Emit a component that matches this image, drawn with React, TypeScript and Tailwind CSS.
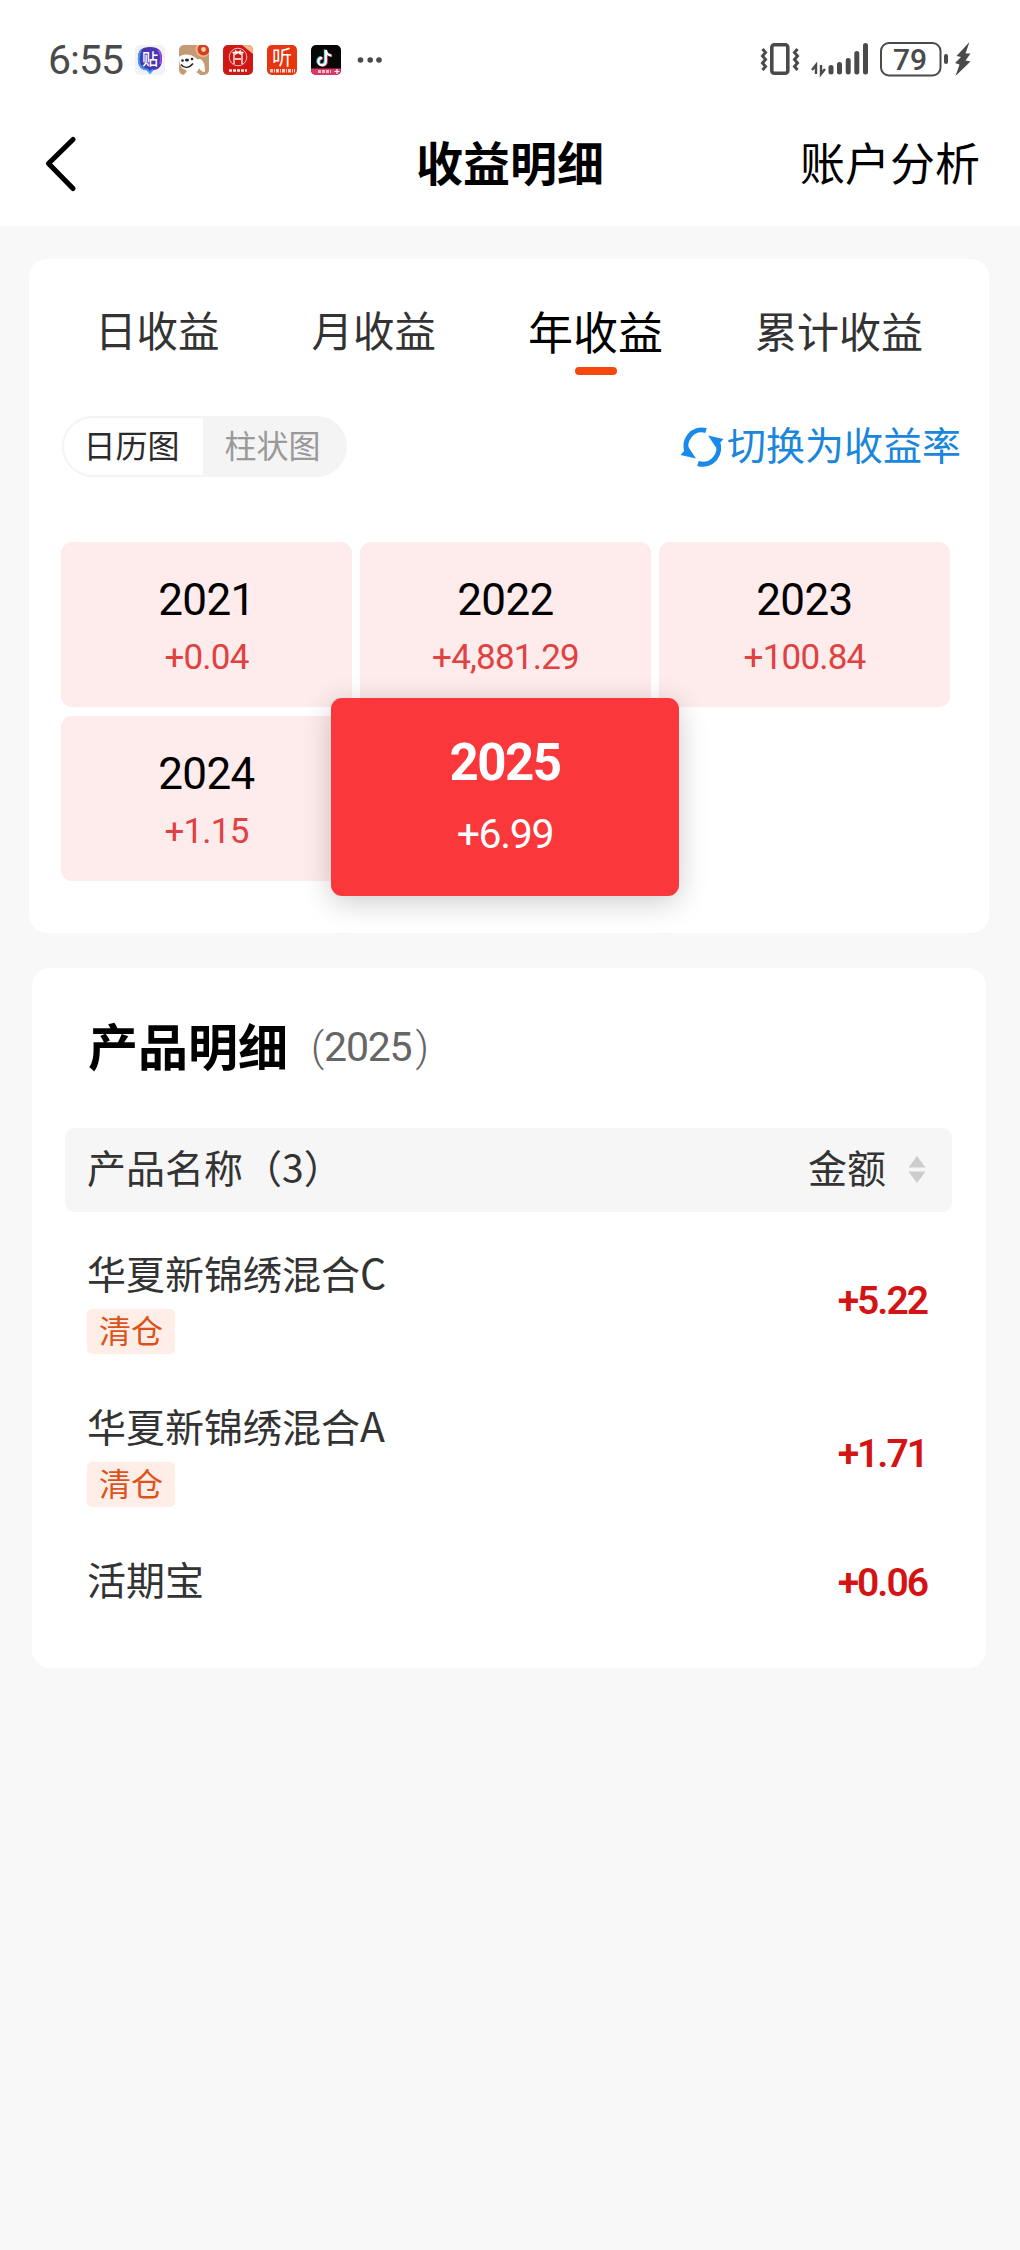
import React from "react";

const CJK = "font-['Noto_Sans_CJK_SC',sans-serif]";
const NUM = "font-['Roboto','Noto_Sans_CJK_SC',sans-serif]";

function StatusIcons() {
  return (
    <svg width="252" height="40" viewBox="130 40 252 40" className="ml-[7px]">
      <rect x="135" y="45" width="30" height="30" rx="5" fill="#f1f1f6" />
      <path d="M150 47c9 0 12 4 12 11.500s-3 11.500-9 11.500l-3 3.500-3-3.500c-6 0-9-4-9-11.500s3-11.500 12-11.500z" fill="#4a35b0" />
      <path d="M141 50c-3 5-3 13 0 17 2 2 4 2.500 6 2.500l3 3 3-3" fill="none" stroke="#3a9cf5" strokeWidth="2" />
      <path d="M158 50c3 3 3.500 9 2 14" fill="none" stroke="#9a4be0" strokeWidth="2" />
      <text x="150" y="65" fontSize="16" fontWeight="500" fill="#fff" textAnchor="middle" fontFamily="Noto Sans CJK SC">贴</text>

      <clipPath id="dog"><rect x="179" y="45" width="30" height="30" rx="5" /></clipPath>
      <g clipPath="url(#dog)">
        <rect x="179" y="45" width="30" height="30" fill="#c49b74" />
        <circle cx="203" cy="49.500" r="7.500" fill="#efb98a" />
        <circle cx="203.500" cy="49.500" r="6" fill="#d23e26" />
        <circle cx="203.500" cy="49.500" r="2.400" fill="#f5d09a" />
        <path d="M179 57c3-3 11-4 17 1 1 1 2 2 3 1 4 0 6 5 6 13-3 0-5-2-6-4-1 4-5 6-9 7-4-1-3-4-4-5-4-1-7-4-7-13z" fill="#fff" />
        <path d="M184 75c1-4 8-5 14-2l2 2z" fill="#fff" />
        <circle cx="182.500" cy="60.500" r="1.300" fill="#222" />
        <circle cx="192" cy="59" r="1.300" fill="#222" />
        <ellipse cx="187" cy="60" rx="2" ry="1.500" fill="#222" />
        <path d="M181 64.500c3 4 8 4 12-1" fill="none" stroke="#222" strokeWidth="1.400" />
      </g>

      <rect x="223" y="45" width="30" height="30" rx="5" fill="#cf1713" />
      <path d="M242 45h6a5 5 0 0 1 5 5v4z" fill="#f0b98a" />
      <circle cx="238" cy="57" r="8.800" fill="none" stroke="#fff" strokeWidth="0.900" opacity=".8" />
      <path d="M232.500 52.500h11M234 52.500v11.500M242 52.500v11.500M235 59h6M235 50.500l6 4M241 50.500l-6 4" fill="none" stroke="#fff" strokeWidth="1.300" />
      <path d="M229 70.500h18" stroke="#fff" strokeWidth="2.500" strokeDasharray="3 1" opacity=".9" />

      <rect x="267" y="45" width="30" height="30" rx="5" fill="#e8340f" />
      <text x="282" y="65" fontSize="20" fill="#fff" textAnchor="middle" fontFamily="Noto Sans CJK SC">听</text>
      <path d="M270 70.800h25" stroke="#fff" strokeWidth="3.600" strokeDasharray="3 1 1 1" opacity=".8" />

      <clipPath id="note"><rect x="311" y="45" width="30" height="30" rx="5" /></clipPath>
      <g clipPath="url(#note)">
        <rect x="311" y="45" width="30" height="30" fill="#060606" />
        <path d="M325 49.500v11.500a3.700 3.700 0 1 1-3.700-3.700M325 49.500c0 3 2 5 5.500 5.500" fill="none" stroke="#25e0dc" strokeWidth="2.400" />
        <path d="M326.600 50.500v11.500a3.700 3.700 0 1 1-3.700-3.700M326.600 50.500c0 3 2 5 5.500 5.500" fill="none" stroke="#f0406a" strokeWidth="2.400" />
        <path d="M325.800 50v11.500a3.700 3.700 0 1 1-3.700-3.700M325.800 50c0 3 2 5 5.500 5.500" fill="none" stroke="#fff" strokeWidth="2.200" />
        <path d="M311 68.500h30v6.500h-30z" fill="#d93a68" />
        <path d="M318 71.500h13" stroke="#fff" strokeWidth="3" strokeDasharray="3 1" opacity=".65" />
        <path d="M337 69v5M334.500 71.500h5" stroke="#fff" strokeWidth="1.200" />
      </g>
      <g fill="#4a4a4a"><circle cx="360.500" cy="60" r="2.800" /><circle cx="370.200" cy="60" r="2.800" /><circle cx="379" cy="60" r="2.800" /></g>
    </svg>
  );
}

function SystemIcons() {
  return (
    <svg width="216" height="40" viewBox="758 40 216 40" className="mr-[46px] ml-auto">
      <g fill="none" stroke="#4a4a4a">
        <rect x="771.800" y="44.800" width="16" height="28.500" rx="2.500" strokeWidth="3.600" />
        <path d="M762.500 49l3 3.500-3 3.500 3 3.500-3 3.500 3 3.500-3 3.500M797.500 49l-3 3.500 3 3.500-3 3.500 3 3.500-3 3.500 3 3.500" strokeWidth="3" />
        <path d="M831 67.500v4.500M839.500 64.500v7.500M848.200 60.500v11.500M856.800 53.500v18.500M865.500 45.500v26.500" strokeWidth="5" strokeLinecap="round" />
        <path d="M816 74v-9l-4 5M821 65v9l4-5" strokeWidth="2.400" />
        <rect x="881" y="43" width="59.500" height="32.500" rx="8" strokeWidth="2" />
        <path d="M946 56v6" strokeWidth="4" strokeLinecap="round" />
      </g>
      <path d="M969.500 42L956.500 56l4.500 1-6 6 4.500 1.500-4 11.500 15-14.500-5-1 5-7h-5z" fill="#4a4a4a" />
      <text x="910" y="70" fontSize="30" fontWeight="500" fill="#4a4a4a" textAnchor="middle" fontFamily="Roboto">79</text>
    </svg>
  );
}

const tabs = [
  { label: "日收益", cls: "ml-[66px] text-[41.500px] text-[#333]" },
  { label: "月收益", cls: "ml-[92px] text-[41.500px] text-[#333]" },
  { label: "年收益", cls: "ml-[92px] text-[45px] text-black", active: true },
  { label: "累计收益", cls: "ml-[92px] text-[42px] text-[#333]" },
];

const years = [
  ["2021", "+0.04"],
  ["2022", "+4,881.29"],
  ["2023", "+100.84"],
  ["2024", "+1.15"],
];

const products = [
  { name: "华夏新锦绣混合", share: "C", tag: "清仓", amount: "+5.22" },
  { name: "华夏新锦绣混合", share: "A", tag: "清仓", amount: "+1.71" },
  { name: "活期宝", share: "", amount: "+0.06" },
];

export default function App() {
  return (
    <div className={`min-h-[2250px] w-[1020px] bg-[#f8f8f8] ${CJK}`}>
      <header className="h-[226px] bg-white">
        <div className="flex h-[120px] items-center pl-[48px]">
          <span className={`w-[75px] text-[41px] leading-none tracking-[-1px] whitespace-nowrap text-[#4a4a4a] ${NUM}`}>6:55</span>
          <StatusIcons />
          <SystemIcons />
        </div>
        <div className="grid h-[88px] grid-cols-3 items-center">
          <svg width="34" height="60" viewBox="0 0 34 60" className="ml-[43px]">
            <path d="M30 5.500L5.500 29.500l24.500 25" fill="none" stroke="#000" strokeWidth="5.200" strokeLinecap="round" strokeLinejoin="round" />
          </svg>
          <h1 className="pb-[8px] text-center text-[47px] leading-none font-bold text-black">收益明细</h1>
          <span className="mr-[40px] pb-[6px] text-right text-[45px] leading-none text-black">账户分析</span>
        </div>
      </header>

      <section className="mt-[33px] ml-[29px] h-[674px] w-[960px] rounded-[18px] bg-white">
        <nav className="flex h-[146px] items-center pb-[4px]">
          {tabs.map((t) => (
            <div key={t.label} className={`relative leading-none whitespace-nowrap ${t.cls}`}>
              {t.label}
              {t.active && <span className="absolute top-[59px] left-1/2 h-[8px] w-[42px] -translate-x-1/2 rounded-full bg-[#f5490f]" />}
            </div>
          ))}
        </nav>
        <div className="mt-[11px] mr-[28px] ml-[33px] flex h-[61px] items-center justify-between">
          <div className="flex h-[61px] w-[285px] overflow-hidden rounded-full border-2 border-[#f4f4f4] bg-[#f4f4f4] text-[32px] leading-none">
            <div className="flex w-[139px] items-center justify-center bg-white pr-[4px] pb-[6px] text-[#2b2b2b]">日历图</div>
            <div className="flex flex-1 items-center justify-center pr-[3px] pb-[6px] text-[#999]">柱状图</div>
          </div>
          <div className="flex items-center text-[39px] leading-none text-[#1a86dc]">
            <svg width="44" height="44" viewBox="0 0 44 44" className="mr-[3px]">
              <g fill="none" stroke="#1a8aea" strokeWidth="5">
                <path d="M7.500 28A16 16 0 0 1 26 5.500" />
                <path d="M37 16A16 16 0 0 1 18 38.500" />
              </g>
              <path d="M28 10.500l15.500 3.500-7.500 8.500zM16 33.500L.5 30 8 21.500z" fill="#1a8aea" />
            </svg>
            <span className="pb-[7px]">切换为收益率</span>
          </div>
        </div>

        <div className="mt-[65px] ml-[32px] grid w-[889px] grid-cols-3 gap-x-[8px] gap-y-[9px]">
          {years.map(([y, v]) => (
            <div key={y} className={`flex h-[165px] flex-col items-center rounded-[11px] bg-[#feebeb] ${NUM}`}>
              <span className="mt-[36px] text-[44px] leading-[44px] tracking-[-0.600px] text-black">{y}</span>
              <span className="mt-[18px] text-[35px] leading-[35px] tracking-[-0.800px] text-[#e04141]">{v}</span>
            </div>
          ))}
          <div className={`relative -top-[18px] -left-[29px] z-10 flex h-[198px] w-[348px] flex-col items-center rounded-[11px] bg-[#fa373a] text-white shadow-[0_6px_30px_rgba(0,0,0,0.200)] ${NUM}`}>
            <span className="mt-[39px] text-[51px] leading-[51px] font-bold tracking-[-1.500px]">2025</span>
            <span className="mt-[26px] text-[41px] leading-[41px] tracking-[-1.300px]">+6.99</span>
          </div>
        </div>
      </section>

      <section className="mt-[35px] ml-[32px] h-[700px] w-[954px] rounded-[18px] bg-white px-[33px] pt-[48px]">
        <div className="ml-[23px] flex h-[64px] items-center leading-none">
          <h2 className="pb-[9px] text-[50px] font-bold text-black">产品明细</h2>
          <span className={`ml-[23px] pb-[2px] text-[41px] text-[#666] ${NUM}`}>
            <span className="font-light">(</span>
            <span className="mr-[4px] tracking-[-1.200px]">2025</span>
            <span className="font-light">)</span>
          </span>
        </div>
        <div className="mt-[48px] flex h-[84px] w-[887px] items-center rounded-[9px] bg-[#f6f6f6] px-[22px] text-[39px] leading-none text-[#333]">
          <span className="pb-[7px]">产品名称（3）</span>
          <span className="ml-auto pb-[7px]">金额</span>
          <svg width="18" height="27" viewBox="0 0 18 27" className="mr-[4px] mb-[1px] ml-[22px]">
            <path d="M9 0l8.500 11.500H.5zM9 27l8.500-11.500H.5z" fill="#ccc" />
          </svg>
        </div>
        <div className="pt-[37px]">
          {products.map((p) => (
            <div key={p.name + p.share} className={p.tag ? "ml-[22px] flex h-[153px] w-[840px] justify-between" : "ml-[22px] flex h-[60px] w-[840px] justify-between"}>
              <div>
                <div className="h-[60px] pt-[2px] text-[39px] leading-[40px] text-[#333]">
                  {p.name}
                  <span className="text-[41px]">{p.share}</span>
                </div>
                {p.tag && <div className="flex h-[45px] w-[88px] items-center justify-center rounded-[5px] bg-[#ffeee7] pb-[5px] text-[32px] leading-none text-[#dd5218]">{p.tag}</div>}
              </div>
              <span className={`text-[39px] leading-[40px] font-semibold tracking-[-2px] text-[#d41414] ${NUM} ${p.tag ? "mt-[32px]" : "mt-[8px]"}`}>{p.amount}</span>
            </div>
          ))}
        </div>
      </section>
    </div>
  );
}
